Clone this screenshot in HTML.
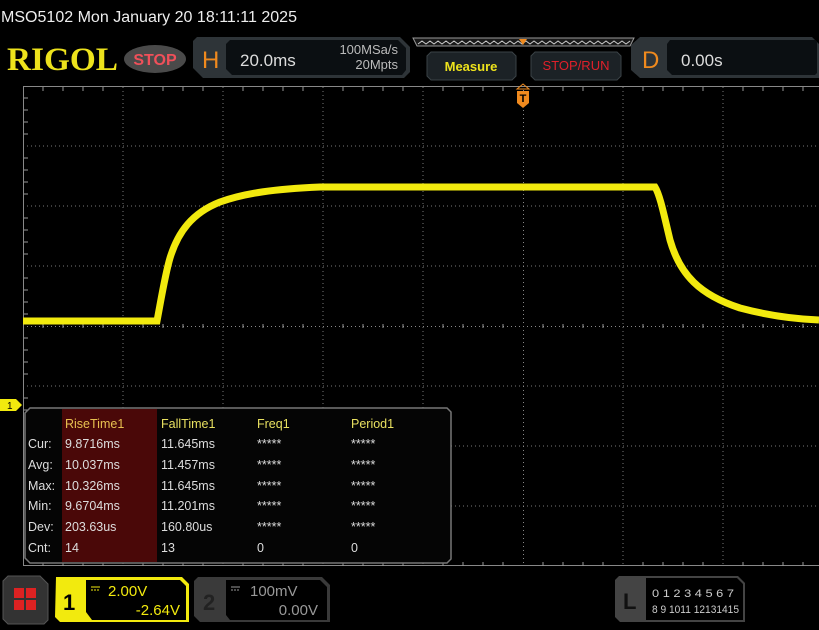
<!DOCTYPE html>
<html><head><style>
html,body{margin:0;padding:0;background:#000;width:819px;height:630px;overflow:hidden}
svg{display:block}
text{font-family:"Liberation Sans","DejaVu Sans",sans-serif}
</style></head><body>
<svg width="819" height="630" viewBox="0 0 819 630" xmlns="http://www.w3.org/2000/svg">
<rect width="819" height="630" fill="#000"/>
<text x="1" y="22" fill="#eee" font-size="15.5" textLength="296" lengthAdjust="spacingAndGlyphs">MSO5102  Mon January 20 18:11:11 2025</text>
<!-- RIGOL -->
<text x="7" y="70" fill="#ede21c" style="font-family:'Liberation Serif',serif;font-weight:bold;font-size:33px" textLength="111" lengthAdjust="spacingAndGlyphs">RIGOL</text>
<ellipse cx="155" cy="59" rx="31" ry="14" fill="#4a4a4a"/>
<text x="155" y="65" fill="#f0505a" font-size="16" font-weight="bold" text-anchor="middle">STOP</text>
<!-- H box -->
<path d="M197 37 H400 L410 47 V72 L404 78 H203 L193 68 V41Z" fill="#2e3438"/>
<path d="M230 40 H398 L406 48 V70 L402 75 H232 L226 69 V44Z" fill="#0b0f12"/>
<text x="202" y="68" fill="#f08a1e" font-size="24">H</text>
<text x="240" y="66" fill="#ddd" font-size="17">20.0ms</text>
<text x="398" y="54" fill="#bbb" font-size="13" text-anchor="end">100MSa/s</text>
<text x="398" y="69" fill="#bbb" font-size="13" text-anchor="end">20Mpts</text>
<!-- zigzag bar -->
<path d="M413 38 H634 L630 46 H417Z" fill="#1a1a1a" stroke="#999" stroke-width="1"/>
<polyline fill="none" stroke="#ccc" stroke-width="1" points="418,44 422,41 426,44 430,41 434,44 438,41 442,44 446,41 450,44 454,41 458,44 462,41 466,44 470,41 474,44 478,41 482,44 486,41 490,44 494,41 498,44 502,41 506,44 510,41 514,44 518,41 522,44 526,41 530,44 534,41 538,44 542,41 546,44 550,41 554,44 558,41 562,44 566,41 570,44 574,41 578,44 582,41 586,44 590,41 594,44 598,41 602,44 606,41 610,44 614,41 618,44 622,41 626,44 630,41"/>
<path d="M519 39 H527 L523 45Z" fill="#f08a1e"/>
<!-- Measure button -->
<path d="M431 52 H512 L516 56 V76 L512 80 H431 L427 76 V56Z" fill="#1c2226" stroke="#3a4246"/>
<text x="471" y="71" fill="#ede21c" font-size="13" font-weight="bold" text-anchor="middle">Measure</text>
<path d="M535 52 H617 L621 56 V76 L617 80 H535 L531 76 V56Z" fill="#1c2226" stroke="#3a4246"/>
<text x="576" y="70" fill="#e0202a" font-size="13" text-anchor="middle">STOP/RUN</text>
<!-- D box -->
<path d="M640 37 H812 L819 44 V78 H640 L631 70 V45Z" fill="#2e3438"/>
<path d="M670 40 H815 L817 42 V73 L815 75 H672 L667 70 V44Z" fill="#0b0f12"/>
<text x="642" y="68" fill="#f08a1e" font-size="24">D</text>
<text x="681" y="66" fill="#ddd" font-size="17">0.00s</text>
<!-- grid -->
<g stroke="#777" stroke-width="1" stroke-dasharray="1,3" fill="none">
<path d="M123 87V566M223 87V566M323 87V566M423 87V566M623 87V566M723 87V566"/>
<path d="M23 146H819M23 206H819M23 266H819M23 386H819M23 446H819M23 506H819"/>
</g>
<g stroke="#888" stroke-width="1" fill="none">
<path d="M23.5 86V566M23 86.5H819M23 565.5H819"/>
<path d="M523.5 86V566" stroke-dasharray="1,3"/>
<path d="M23 326.5H819" stroke-dasharray="1,3"/>
</g>
<g stroke="#999" stroke-width="1">
<path id="tk" d="M43 87v4M63 87v4M83 87v4M103 87v4M143 87v4M163 87v4M183 87v4M203 87v4M243 87v4M263 87v4M283 87v4M303 87v4M343 87v4M363 87v4M383 87v4M403 87v4M443 87v4M463 87v4M483 87v4M503 87v4M543 87v4M563 87v4M583 87v4M603 87v4M643 87v4M663 87v4M683 87v4M703 87v4M743 87v4M763 87v4M783 87v4M803 87v4"/>
<use href="#tk" transform="translate(0,237)"/>
<use href="#tk" transform="translate(0,475)"/>
<path d="M24 98h4M24 110h4M24 122h4M24 134h4M24 158h4M24 170h4M24 182h4M24 194h4M24 218h4M24 230h4M24 242h4M24 254h4M24 278h4M24 290h4M24 302h4M24 314h4M24 338h4M24 350h4M24 362h4M24 374h4M24 398h4M24 410h4"/>
</g>
<!-- trigger marker -->
<path d="M517 89 L523 84 L529 89Z" fill="none" stroke="#f08a1e"/>
<path d="M517 91 H529 V103 L523 108 L517 103Z" fill="#f08a1e"/>
<text x="523" y="102" fill="#000" font-size="11" font-weight="bold" text-anchor="middle">T</text>
<!-- waveform -->
<path d="M23 321 H157 C161 300 165 275 170 258 C178 232 192 213 220 202 C245 193 275 189 320 187 H655 C660 195 664 215 670 240 C680 275 700 295 740 308 C770 316 795 319 819 320" fill="none" stroke="#f2ea0e" stroke-width="7"/>
<!-- ch1 marker -->
<path d="M0 399 H16 L22 405 L16 411 H0Z" fill="#f2ea0e"/>
<text x="7" y="409" fill="#000" font-size="10">1</text>
<!-- measurement table -->
<path d="M30 408 H447 L451 412 V559 L447 563 H30 L25 558 V413Z" fill="#050505" stroke="#777" stroke-width="1.5"/>
<rect x="62" y="409" width="95" height="153" fill="#4a0808"/>
<g font-size="12.5" fill="#ddd">
<text x="65" y="428" fill="#e8c050">RiseTime1</text>
<text x="161" y="428" fill="#e8e060">FallTime1</text>
<text x="257" y="428" fill="#e8e060">Freq1</text>
<text x="351" y="428" fill="#e8e060">Period1</text>
<text x="28" y="448">Cur:</text><text x="65" y="448">9.8716ms</text><text x="161" y="448">11.645ms</text><text x="257" y="448">*****</text><text x="351" y="448">*****</text>
<text x="28" y="469">Avg:</text><text x="65" y="469">10.037ms</text><text x="161" y="469">11.457ms</text><text x="257" y="469">*****</text><text x="351" y="469">*****</text>
<text x="28" y="490">Max:</text><text x="65" y="490">10.326ms</text><text x="161" y="490">11.645ms</text><text x="257" y="490">*****</text><text x="351" y="490">*****</text>
<text x="28" y="510">Min:</text><text x="65" y="510">9.6704ms</text><text x="161" y="510">11.201ms</text><text x="257" y="510">*****</text><text x="351" y="510">*****</text>
<text x="28" y="531">Dev:</text><text x="65" y="531">203.63us</text><text x="161" y="531">160.80us</text><text x="257" y="531">*****</text><text x="351" y="531">*****</text>
<text x="28" y="552">Cnt:</text><text x="65" y="552">14</text><text x="161" y="552">13</text><text x="257" y="552">0</text><text x="351" y="552">0</text>
</g>
<!-- bottom bar -->
<path d="M8 576 H40 L48 584 V620 L44 624 H8 L3 619 V581Z" fill="#333" stroke="#555"/>
<rect x="14" y="588" width="10" height="10" fill="#d22"/><rect x="26" y="588" width="10" height="10" fill="#d22"/>
<rect x="14" y="600" width="10" height="10" fill="#d22"/><rect x="26" y="600" width="10" height="10" fill="#d22"/>
<path d="M56 577 H182 L189 584 V622 H60 L55 617Z" fill="#f2ea0e"/>
<path d="M86 580 H180 L186 586 V620 H92 L86 612Z" fill="#000"/>
<text x="63" y="610" fill="#000" font-size="22" font-weight="bold">1</text>
<path d="M91 587h9M91 590h2M94 590h2M97 590h2" stroke="#f2ea0e"/>
<text x="108" y="596" fill="#f2ea0e" font-size="15">2.00V</text>
<text x="180" y="615" fill="#f2ea0e" font-size="15" text-anchor="end">-2.64V</text>
<path d="M198 577 H322 L330 585 V622 H200 L194 616 V581Z" fill="#3a3a3a"/>
<path d="M226 580 H320 L327 587 V620 H230 L226 615Z" fill="#000"/>
<text x="203" y="610" fill="#222" font-size="22" font-weight="bold">2</text>
<path d="M231 587h9M231 590h2M234 590h2M237 590h2" stroke="#999"/>
<text x="250" y="596" fill="#999" font-size="15">100mV</text>
<text x="318" y="615" fill="#999" font-size="15" text-anchor="end">0.00V</text>
<path d="M619 576 H738 L745 583 V622 H620 L615 617 V580Z" fill="#444"/>
<path d="M646 578 H737 L743 584 V620 H646Z" fill="#000"/>
<text x="623" y="609" fill="#111" font-size="22" font-weight="bold">L</text>
<g fill="#ccc" font-size="11">
<text x="652" y="597" textLength="82" lengthAdjust="spacingAndGlyphs">0 1 2 3  4 5 6 7</text>
<text x="652" y="613" textLength="87" lengthAdjust="spacingAndGlyphs">8 9 1011 12131415</text>
</g>
</svg>
</body></html>
